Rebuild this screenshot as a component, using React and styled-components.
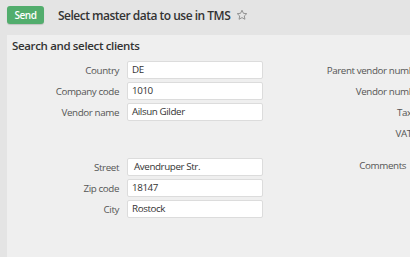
import React from "react";
import styled, { createGlobalStyle } from "styled-components";

const Global = createGlobalStyle`
  html, body { margin: 0; padding: 0; background: #e4e4e4; }
  body { font-family: "Open Sans", "Noto Sans", sans-serif; overflow: hidden; }
`;

const Page = styled.div`
  width: 410px;
  height: 257px;
  display: flex;
  flex-direction: column;
  background: #e4e4e4;
  overflow: hidden;
`;

const Toolbar = styled.div`
  display: flex;
  align-items: center;
  height: 35px;
  padding: 0 0 0 7px;
  box-sizing: border-box;
  flex-shrink: 0;
`;

const SendButton = styled.button`
  width: 37px;
  height: 18px;
  margin-top: -5px;
  border: none;
  border-radius: 3px;
  background: #52ad6d;
  color: #fff;
  font-family: inherit;
  font-size: 10px;
  font-weight: 600;
  letter-spacing: -0.4px;
  padding: 0;
  box-shadow: 0 1px 1px rgba(0, 0, 0, 0.15);
`;

const Title = styled.h1`
  margin: -5px 0 0 14px;
  font-size: 12px;
  font-weight: 600;
  letter-spacing: -0.5px;
  color: #333;
`;

const Star = styled.svg`
  margin: -5px 0 0 6px;
`;

const Panel = styled.div`
  flex: 1;
  margin-left: 7px;
  background: #efefef;
  padding: 3px 0 0 5px;
  min-width: 0;
`;

const PanelTitle = styled.h2`
  margin: 0 0 8px 0;
  font-size: 11.5px;
  font-weight: 600;
  letter-spacing: -0.35px;
  color: #333;
`;

const Columns = styled.div`
  display: grid;
  grid-template-columns: 256px 200px;
`;

const FieldList = styled.div`
  display: flex;
  flex-direction: column;
  gap: 3px;
`;

const Row = styled.div`
  display: flex;
  align-items: center;
  height: 18px;
`;

const Label = styled.label`
  width: ${(p) => p.$w}px;
  flex-shrink: 0;
  text-align: right;
  font-size: 9.8px;
  letter-spacing: -0.4px;
  color: #555;
  white-space: nowrap;
`;

const Input = styled.div`
  margin-left: 8px;
  width: 136px;
  height: 18px;
  box-sizing: border-box;
  border: 1px solid #dcdcdc;
  border-radius: 2px;
  background: #fff;
  font-size: 9.8px;
  letter-spacing: -0.4px;
  color: #333;
  padding-left: ${(p) => (p.$indent ? 6 : 4)}px;
  line-height: 16px;
`;

const Spacer = styled.div`
  height: ${(p) => p.$h}px;
`;

const leftTop = [
  ["Country", "DE"],
  ["Company code", "1010"],
  ["Vendor name", "Ailsun Gilder"],
];
const leftBottom = [
  ["Street", "Avendruper Str.", true],
  ["Zip code", "18147"],
  ["City", "Rostock"],
];
const rightTop = ["Parent vendor number", "Vendor number", "Tax ID", "VAT ID"];

export default function App() {
  return (
    <Page>
      <Global />
      <Toolbar>
        <SendButton>Send</SendButton>
        <Title>Select master data to use in TMS</Title>
        <Star width="12" height="12" viewBox="0 0 24 24" fill="none" stroke="#888" strokeWidth="1.8" strokeLinejoin="round">
          <path d="M12 2.5l2.9 6.1 6.6.8-4.9 4.5 1.3 6.6L12 17.2l-5.9 3.3 1.3-6.6-4.9-4.5 6.6-.8z" />
        </Star>
      </Toolbar>
      <Panel>
        <PanelTitle>Search and select clients</PanelTitle>
        <Columns>
          <FieldList>
            {leftTop.map(([l, v]) => (
              <Row key={l}>
                <Label $w={107}>{l}</Label>
                <Input>{v}</Input>
              </Row>
            ))}
            <Spacer $h={31} />
            {leftBottom.map(([l, v, indent]) => (
              <Row key={l}>
                <Label $w={107}>{l}</Label>
                <Input $indent={indent}>{v}</Input>
              </Row>
            ))}
          </FieldList>
          <FieldList>
            {rightTop.map((l) => (
              <Row key={l}>
                <Label $w={155}>{l}</Label>
              </Row>
            ))}
            <Spacer $h={8} />
            <Row>
              <Label $w={138}>Comments</Label>
            </Row>
          </FieldList>
        </Columns>
      </Panel>
    </Page>
  );
}
